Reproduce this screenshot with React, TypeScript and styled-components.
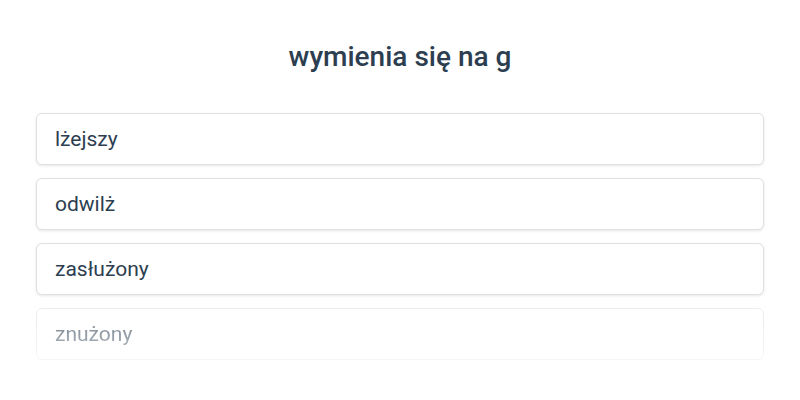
import React from 'react'
import styled, { createGlobalStyle } from 'styled-components'

const GlobalStyle = createGlobalStyle`
  html, body {
    margin: 0;
    padding: 0;
    background: #ffffff;
    font-family: Roboto, 'Liberation Sans', sans-serif;
  }
`

const Page = styled.div`
  width: 800px;
  height: 400px;
  box-sizing: border-box;
  padding: 40px 36px 0;
  display: flex;
  flex-direction: column;
`

const Title = styled.h1`
  margin: 0 0 39px;
  text-align: center;
  font-size: 28px;
  line-height: 34px;
  font-weight: 500;
  color: #2c3e50;
`

const List = styled.div`
  display: flex;
  flex-direction: column;
  gap: 13px;
`

const Option = styled.div<{ $faded?: boolean }>`
  height: 52px;
  box-sizing: border-box;
  display: flex;
  align-items: center;
  padding: 0 18px;
  background: #ffffff;
  border: 1px solid #e0e0e0;
  border-radius: 6px;
  box-shadow: 0 1px 3px rgba(0, 0, 0, 0.1);
  font-size: 21px;
  color: #2c3e50;
  ${(p) =>
    p.$faded &&
    `
    opacity: 0.6;
    -webkit-mask-image: linear-gradient(to bottom, #000 30%, rgba(0, 0, 0, 0.5) 100%);
    mask-image: linear-gradient(to bottom, #000 30%, rgba(0, 0, 0, 0.5) 100%);
  `}
`

const options = ['lżejszy', 'odwilż', 'zasłużony', 'znużony']

export default function App() {
  return (
    <>
      <GlobalStyle />
      <Page>
        <Title>wymienia się na g</Title>
        <List>
          {options.map((o, i) => (
            <Option key={o} $faded={i === options.length - 1}>
              {o}
            </Option>
          ))}
        </List>
      </Page>
    </>
  )
}
